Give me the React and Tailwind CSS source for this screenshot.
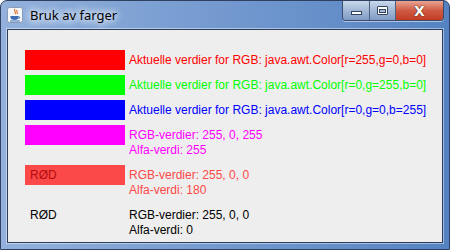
const rows = [
  { box: 'bg-[#ff0000]', text: 'text-[#ff0000]', lines: ['Aktuelle verdier for RGB: java.awt.Color[r=255,g=0,b=0]'] },
  { box: 'bg-[#00ff00]', text: 'text-[#00ff00]', lines: ['Aktuelle verdier for RGB: java.awt.Color[r=0,g=255,b=0]'] },
  { box: 'bg-[#0000ff]', text: 'text-[#0000ff]', lines: ['Aktuelle verdier for RGB: java.awt.Color[r=0,g=0,b=255]'] },
  { box: 'bg-[#ff00ff]', text: 'text-[#ff00ff]', lines: ['RGB-verdier: 255, 0, 255', 'Alfa-verdi: 255'] },
  { box: 'bg-[#fb4848]', text: 'text-[#fb4848]', label: 'RØD', labelColor: 'text-[#b40c0c]', lines: ['RGB-verdier: 255, 0, 0', 'Alfa-verdi: 180'] },
  { box: '', text: 'text-black', label: 'RØD', labelColor: 'text-black', lines: ['RGB-verdier: 255, 0, 0', 'Alfa-verdi: 0'] },
];

function JavaIcon() {
  return (
    <svg width="16" height="16" viewBox="0 0 16 16">
      <rect x="0.5" y="0.5" width="15" height="15" rx="2" fill="#f4f6fa" stroke="#8a9bb5" />
      <path d="M8 2c-2 2 2 3 0 5M10 3c-1.5 1.5 1.5 2 0 4" stroke="#e2661a" strokeWidth="1.1" fill="none" />
      <path d="M3.5 9h8v1.5c0 1.5-1.5 2.5-4 2.5s-4-1-4-2.5z" fill="#3e6db5" />
      <path d="M11.5 9.5c1.5 0 1.5 2 0 2" stroke="#3e6db5" strokeWidth="1" fill="none" />
      <path d="M3 14h10" stroke="#3e6db5" strokeWidth="1" />
    </svg>
  );
}

function WinButtons() {
  return (
    <div className="flex h-[20px] overflow-hidden rounded-b-[4px] border border-t-0 border-[#3b4d6b] shadow-[0_1px_0_rgba(255,255,255,0.5)]">
      <div className="flex w-[27px] items-center justify-center border-r border-[#4c5f7d] bg-gradient-to-b from-[#c9d8ec] via-[#a3b8d6] to-[#7f9cc6]">
        <div className="mt-[5px] h-[4px] w-[11px] border border-[#33445f] bg-white" />
      </div>
      <div className="flex w-[26px] items-center justify-center border-r border-[#4c5f7d] bg-gradient-to-b from-[#c9d8ec] via-[#a3b8d6] to-[#7f9cc6]">
        <div className="h-[9px] w-[11px] rounded-[1px] border border-[#33445f] bg-white p-[1px] pt-[2px]">
          <div className="h-full w-full border border-[#33445f] bg-[#a8bcd8]" />
        </div>
      </div>
      <div className="flex w-[47px] items-center justify-center bg-gradient-to-b from-[#e8a493] via-[#cf5a44] to-[#c23b22]">
        <span className="text-[14px] font-bold leading-none text-white [font-family:'DejaVu_Sans',sans-serif] [text-shadow:0_0_1px_#3a1a12,0_0_1px_#3a1a12]">
          X
        </span>
      </div>
    </div>
  );
}

export default function App() {
  return (
    <div className="flex h-[250px] w-[450px] flex-col rounded-t-[7px] border border-[#2f4060] bg-gradient-to-r from-[#93b1dc] via-[#7399cf] to-[#5583c2] px-[6px] pb-[6px]">
      <div className="flex h-[28px] items-start justify-between">
        <div className="flex items-center gap-[7px] pt-[6px]">
          <JavaIcon />
          <span className="text-[13px] leading-[16px] text-black [font-family:'Noto_Sans',sans-serif] [text-shadow:0_0_8px_#e6eef9,0_0_8px_#e6eef9,0_0_6px_#e6eef9]">
            Bruk av farger
          </span>
        </div>
        <div className="mr-[-1px]">
          <WinButtons />
        </div>
      </div>
      <div className="flex-1 border border-[#2c3d5c] bg-[#eeeeee] shadow-[0_0_0_1px_rgba(255,255,255,0.45)]">
        <div className="flex flex-col gap-[5px] pl-[17px] pt-[20px] text-[12px] [font-family:'Liberation_Sans',Arial,sans-serif]">
          {rows.map((r, i) => (
            <div key={i} className={`flex gap-[4px] ${r.lines.length > 1 ? 'h-[35px]' : 'h-[20px]'}`}>
              <div className={`h-[20px] w-[100px] shrink-0 pl-[5px] leading-[20px] ${r.box} ${r.labelColor || ''}`}>
                {r.label}
              </div>
              <div className={`${r.text} ${r.lines.length > 1 ? 'mt-[3px] leading-[15px]' : 'leading-[20px]'} whitespace-nowrap`}>
                {r.lines.map((l, j) => (
                  <div key={j}>{l}</div>
                ))}
              </div>
            </div>
          ))}
        </div>
      </div>
    </div>
  );
}
